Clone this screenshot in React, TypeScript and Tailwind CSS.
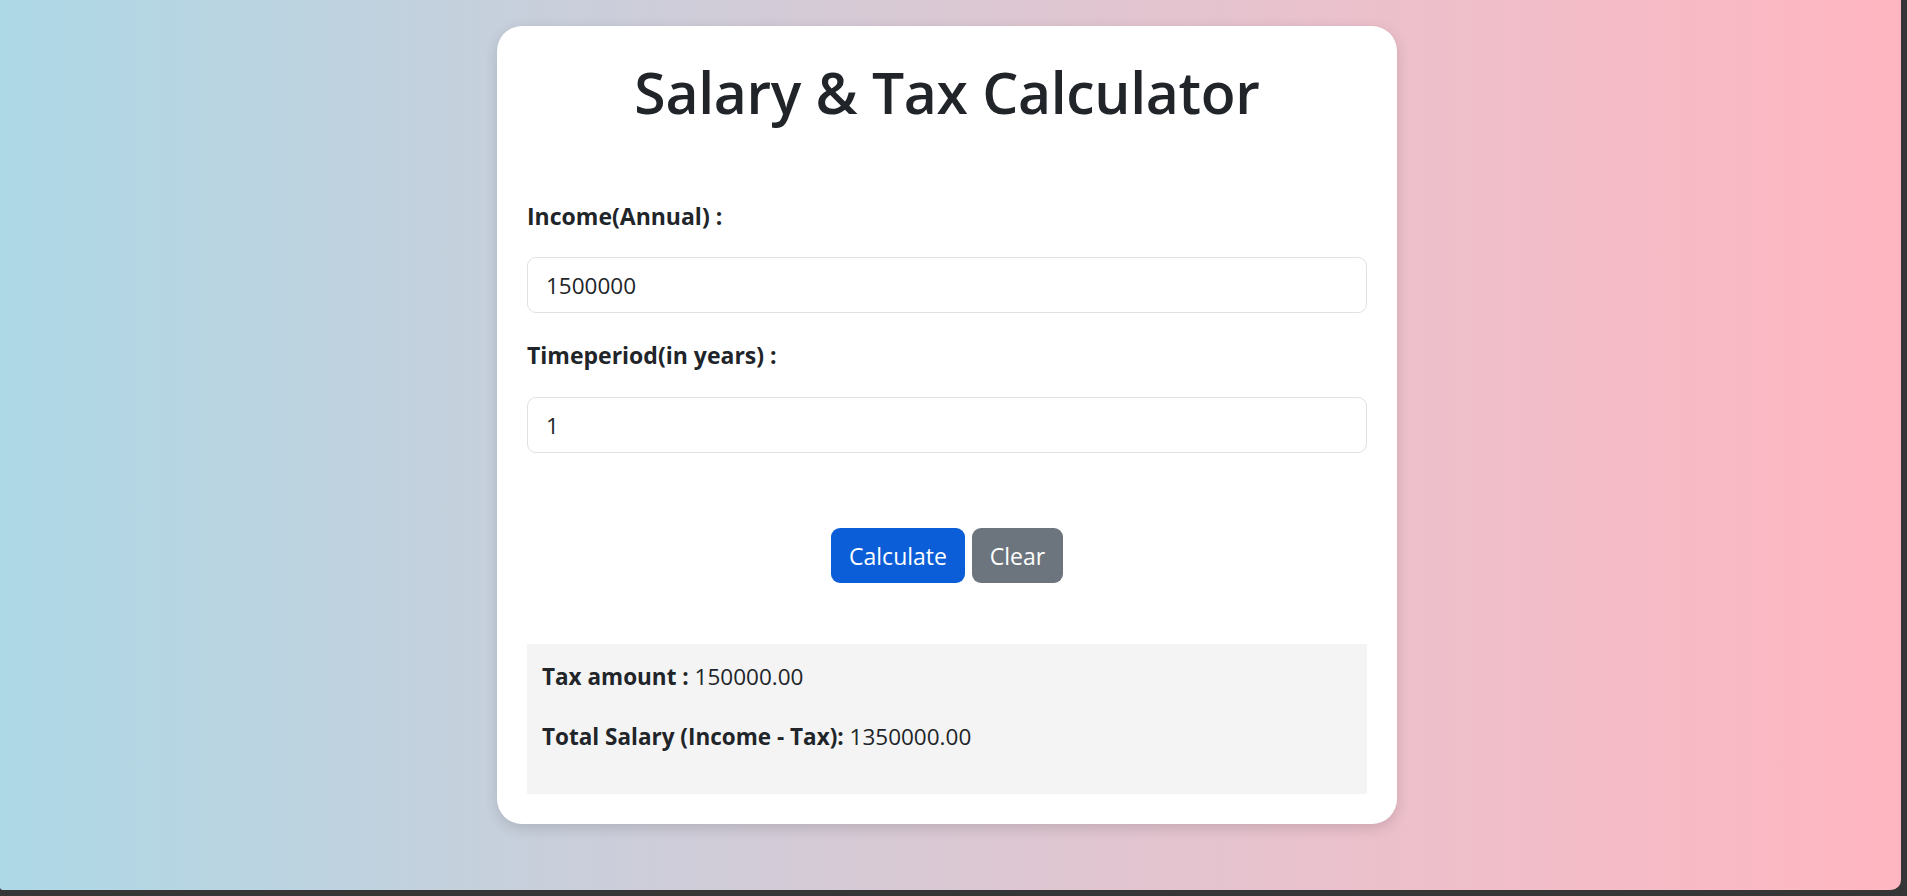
import React, { useState } from "react";

const App: React.FC = () => {
  const [income, setIncome] = useState("1500000");
  const [years, setYears] = useState("1");
  const [result, setResult] = useState<{ tax: string; total: string } | null>({
    tax: "150000.00",
    total: "1350000.00",
  });

  const calculate = () => {
    const amount = parseFloat(income) * (parseFloat(years) || 1);
    if (isNaN(amount)) return;
    const tax = amount * 0.1;
    setResult({ tax: tax.toFixed(2), total: (amount - tax).toFixed(2) });
  };

  const clear = () => {
    setIncome("");
    setYears("");
    setResult(null);
  };

  return (
    <div className="h-[896px] w-full overflow-hidden bg-[#363636] font-['Open_Sans',sans-serif] text-[#212529]">
      <div className="flex h-[890px] w-[1901px] justify-center rounded-bl-[3px] rounded-br-[10px] bg-gradient-to-r from-[#add8e6] to-[#ffb6c1] pr-[7px] pt-[26px]">
        <div className="h-fit w-[900px] rounded-[25px] bg-white p-[30px] shadow-[0_4px_14px_rgba(0,0,0,0.14)]">
          <h1 className="mb-[70px] text-center text-[57px] font-semibold leading-[72px] tracking-[-0.3px]">
            Salary &amp; Tax Calculator
          </h1>

          <label className="mb-[23px] block text-[23px] font-bold leading-[36px]">Income(Annual) :</label>
          <input
            value={income}
            onChange={(e) => setIncome(e.target.value)}
            className="mb-[24px] block h-[56px] w-full rounded-[9px] border border-[#dee2e6] px-[18px] text-[22.5px] leading-[36px] outline-none"
          />

          <label className="mb-[24px] block text-[23px] font-bold leading-[36px]">Timeperiod(in years) :</label>
          <input
            value={years}
            onChange={(e) => setYears(e.target.value)}
            className="block h-[56px] w-full rounded-[9px] border border-[#dee2e6] px-[18px] text-[22.5px] leading-[36px] outline-none"
          />

          <div className="mt-[75px] flex justify-center gap-[7px]">
            <button
              onClick={calculate}
              className="h-[55px] w-[134px] rounded-[9px] bg-[#0b5ed7] text-[23px] leading-[36px] text-white"
            >
              Calculate
            </button>
            <button
              onClick={clear}
              className="h-[55px] w-[91px] rounded-[9px] bg-[#6c757d] text-[23px] leading-[36px] text-white"
            >
              Clear
            </button>
          </div>

          <div className="mt-[61px] bg-[#f4f4f4] p-[15px] text-[22.5px] leading-[36px]">
            <p className="mb-[24px]">
              <span className="font-bold">Tax amount :</span> {result ? result.tax : ""}
            </p>
            <p className="mb-[24px]">
              <span className="font-bold">Total Salary (Income - Tax):</span> {result ? result.total : ""}
            </p>
          </div>
        </div>
      </div>
    </div>
  );
};

export default App;
